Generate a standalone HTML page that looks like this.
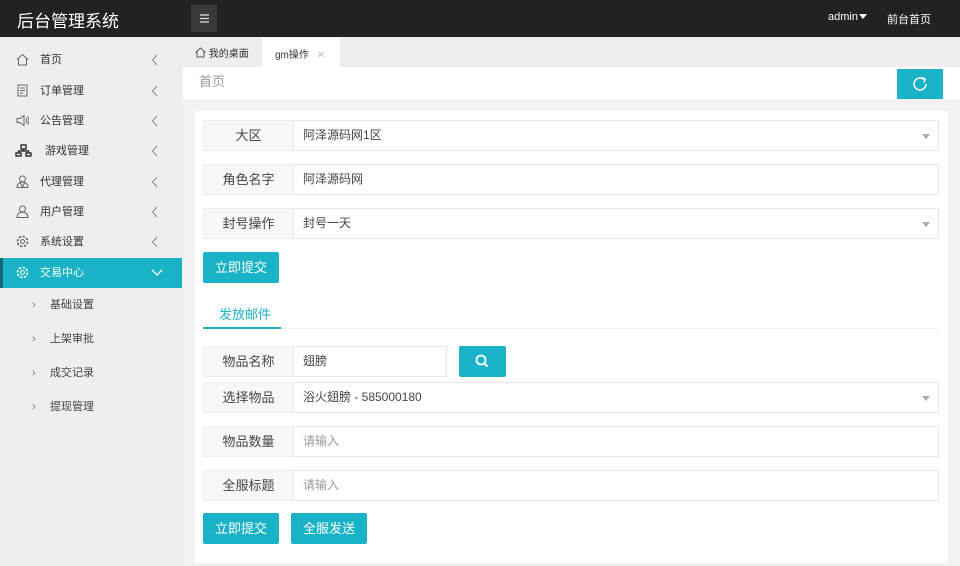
<!DOCTYPE html>
<html><head><meta charset="utf-8"><style>
*{margin:0;padding:0;box-sizing:border-box}
body{width:960px;height:566px;overflow:hidden;background:#f2f2f2;font-family:"Liberation Sans","Noto Sans CJK SC",sans-serif;font-size:12px;color:#333;position:relative}
.a{position:absolute}
.top{left:0;top:0;width:960px;height:37px;background:#222}
.logo{left:17px;top:7px;color:#fff;font-size:17px}
.menu{left:191px;top:5px;width:26px;height:27px;background:#3a3a3a}
.side{left:0;top:37px;width:182px;height:529px;background:#eeeeee}
.it{left:0;width:182px;height:30px;line-height:30px;font-size:11px;color:#333}
.it .ic{position:absolute;left:16px;top:8px;width:13px;height:13px}
.it .tx{position:absolute;left:40px}
.it .ar{position:absolute;left:151px;top:9px}
.act{background:#19b2c6;color:#fff;border-left:3px solid #156a76}
.sub{left:0;width:182px;height:30px;line-height:30px;font-size:11px;color:#444}
.sub .ar{position:absolute;left:32px;color:#777}
.sub .tx{position:absolute;left:50px}
.tabs{left:182px;top:37px;width:778px;height:30px;background:#eeeeee}
.crumb{left:183px;top:67px;width:777px;height:32px;background:#fff;color:#999;font-size:13px;line-height:30px;padding-left:16px}
.refresh{left:897px;top:69px;width:46px;height:30px;background:#19b2c6}
.card{left:195px;top:111px;width:753px;height:452px;background:#fff}
.lb{left:203px;width:91px;height:31px;background:#f7f7f7;border:1px solid #eee;text-align:center;line-height:29px;font-size:13px;color:#444}
.in{left:293px;width:646px;height:31px;border:1px solid #e8e8e8;line-height:29px;padding-left:9px;font-size:12px;color:#444;background:#fff}
.ph{color:#999}
.dd{position:absolute;right:8px;top:13px;border:4px solid transparent;border-top:5px solid #aaa;border-bottom:none}
.btn{height:31px;background:#19b2c6;color:#fff;font-size:13px;line-height:31px;text-align:center;width:76px;border-radius:2px}
</style></head><body>
<div class="a top"></div>
<div class="a logo">后台管理系统</div>
<div class="a menu"><svg width="26" height="27"><g stroke="#ddd" stroke-width="1.3"><line x1="9" y1="10" x2="18" y2="10"/><line x1="9" y1="13.5" x2="18" y2="13.5"/><line x1="9" y1="17" x2="18" y2="17"/></g></svg></div>
<div class="a" style="left:828px;top:11px;color:#fff;font-size:11px">admin</div>
<div class="a" style="left:859px;top:14px;border:4px solid transparent;border-top:5px solid #fff;border-bottom:none"></div>
<div class="a" style="left:887px;top:11px;color:#fff;font-size:11px">前台首页</div>

<div class="a side"></div>
<div class="a it" style="top:45px"><svg class="ic" viewBox="0 0 13 13"><path d="M1 6.5L6.5 1.5 12 6.5M2.5 5.5V12h8V5.5" fill="none" stroke="#666"/></svg><span class="tx">首页</span><svg class="ar" width="8" height="12"><path d="M6 1L1.5 6 6 11" fill="none" stroke="#888"/></svg></div>
<div class="a it" style="top:76px"><svg class="ic" viewBox="0 0 13 13"><path d="M2 1h9v11H2zM4 4h5M4 6.5h5M4 9h3" fill="none" stroke="#666"/></svg><span class="tx">订单管理</span><svg class="ar" width="8" height="12"><path d="M6 1L1.5 6 6 11" fill="none" stroke="#888"/></svg></div>
<div class="a it" style="top:106px"><svg class="ic" viewBox="0 0 13 13"><path d="M1 4.5h3l4-3v10l-4-3H1zM10 4q1.5 2.5 0 5M11.5 2.5q3 4 0 8" fill="none" stroke="#666"/></svg><span class="tx">公告管理</span><svg class="ar" width="8" height="12"><path d="M6 1L1.5 6 6 11" fill="none" stroke="#888"/></svg></div>
<div class="a it" style="top:136px"><svg class="ic" style="width:17px;left:15px" viewBox="0 0 17 13"><path d="M6 1h5v4H6zM1 9h5v3H1zM11 9h5v3h-5zM8.5 5v2M3.5 9V7h10v2" fill="none" stroke="#333" stroke-width="1.4"/></svg><span class="tx" style="left:45px">游戏管理</span><svg class="ar" width="8" height="12"><path d="M6 1L1.5 6 6 11" fill="none" stroke="#888"/></svg></div>
<div class="a it" style="top:167px"><svg class="ic" viewBox="0 0 13 13"><circle cx="6.5" cy="4" r="3" fill="none" stroke="#666"/><path d="M1 12.5q0-5 5.5-5.5 5.5.5 5.5 5.5zM4.5 8l2 4 2-4" fill="none" stroke="#666"/></svg><span class="tx">代理管理</span><svg class="ar" width="8" height="12"><path d="M6 1L1.5 6 6 11" fill="none" stroke="#888"/></svg></div>
<div class="a it" style="top:197px"><svg class="ic" viewBox="0 0 13 13"><circle cx="6.5" cy="4" r="3" fill="none" stroke="#666"/><path d="M1 12.5q0-5 5.5-5.5 5.5.5 5.5 5.5z" fill="none" stroke="#666"/></svg><span class="tx">用户管理</span><svg class="ar" width="8" height="12"><path d="M6 1L1.5 6 6 11" fill="none" stroke="#888"/></svg></div>
<div class="a it" style="top:227px"><svg class="ic" viewBox="0 0 13 13"><circle cx="6.5" cy="6.5" r="2" fill="none" stroke="#666"/><circle cx="6.5" cy="6.5" r="5" fill="none" stroke="#666" stroke-dasharray="2.5 1.4" stroke-width="1.6"/></svg><span class="tx">系统设置</span><svg class="ar" width="8" height="12"><path d="M6 1L1.5 6 6 11" fill="none" stroke="#888"/></svg></div>
<div class="a it act" style="top:258px"><svg class="ic" style="left:13px" viewBox="0 0 13 13"><circle cx="6.5" cy="6.5" r="2" fill="none" stroke="#fff"/><circle cx="6.5" cy="6.5" r="5" fill="none" stroke="#fff" stroke-dasharray="2.5 1.4" stroke-width="1.6"/></svg><span class="tx" style="left:37px">交易中心</span><svg style="position:absolute;left:148px;top:11px" width="12" height="8"><path d="M1 1l5 5 5-5" fill="none" stroke="#fff" stroke-width="1.3"/></svg></div>
<div class="a sub" style="top:290px"><span class="ar">›</span><span class="tx">基础设置</span></div>
<div class="a sub" style="top:324px"><span class="ar">›</span><span class="tx">上架审批</span></div>
<div class="a sub" style="top:358px"><span class="ar">›</span><span class="tx">成交记录</span></div>
<div class="a sub" style="top:392px"><span class="ar">›</span><span class="tx">提现管理</span></div>

<div class="a tabs"></div>
<div class="a" style="left:195px;top:45px;font-size:10px;color:#333"><svg width="11" height="11" style="vertical-align:-1px" viewBox="0 0 11 11"><path d="M.5 5.5l5-4.5 5 4.5M2 4.5V10h7V4.5" fill="none" stroke="#555"/></svg> 我的桌面</div>
<div class="a" style="left:262px;top:38px;width:78px;height:30px;background:#fff"></div>
<div class="a" style="left:275px;top:46px;font-size:10px;color:#333">gm操作 <span style="color:#bbb;margin-left:5px">✕</span></div>
<div class="a crumb">首页</div>
<div class="a refresh"><svg width="46" height="30"><path d="M27 10.5A6 6 0 1 0 29 15" fill="none" stroke="#fff" stroke-width="1.5"/><path d="M24.5 8.5l3.5 1.5-1 3.5" fill="none" stroke="#fff" stroke-width="1.5"/></svg></div>

<div class="a card"></div>
<div class="a lb" style="top:120px">大区</div>
<div class="a in" style="top:120px">阿泽源码网1区<span class="dd"></span></div>
<div class="a lb" style="top:164px">角色名字</div>
<div class="a in" style="top:164px">阿泽源码网</div>
<div class="a lb" style="top:208px">封号操作</div>
<div class="a in" style="top:208px">封号一天<span class="dd"></span></div>
<div class="a btn" style="left:203px;top:252px">立即提交</div>

<div class="a" style="left:219px;top:304px;color:#19b2c6;font-size:13px">发放邮件</div>
<div class="a" style="left:203px;top:328px;width:735px;height:1px;background:#eee"></div>
<div class="a" style="left:203px;top:327px;width:78px;height:2px;background:#19b2c6"></div>

<div class="a lb" style="top:346px">物品名称</div>
<div class="a in" style="top:346px;width:154px">翅膀</div>
<div class="a btn" style="left:459px;top:346px;width:47px"><svg width="47" height="31"><circle cx="22" cy="14" r="4.5" fill="none" stroke="#fff" stroke-width="1.8"/><line x1="25.5" y1="17.5" x2="28.5" y2="20.5" stroke="#fff" stroke-width="2"/></svg></div>
<div class="a lb" style="top:382px">选择物品</div>
<div class="a in" style="top:382px">浴火翅膀 - 585000180<span class="dd"></span></div>
<div class="a lb" style="top:426px">物品数量</div>
<div class="a in ph" style="top:426px">请输入</div>
<div class="a lb" style="top:470px">全服标题</div>
<div class="a in ph" style="top:470px">请输入</div>
<div class="a btn" style="left:203px;top:513px">立即提交</div>
<div class="a btn" style="left:291px;top:513px">全服发送</div>
</body></html>
